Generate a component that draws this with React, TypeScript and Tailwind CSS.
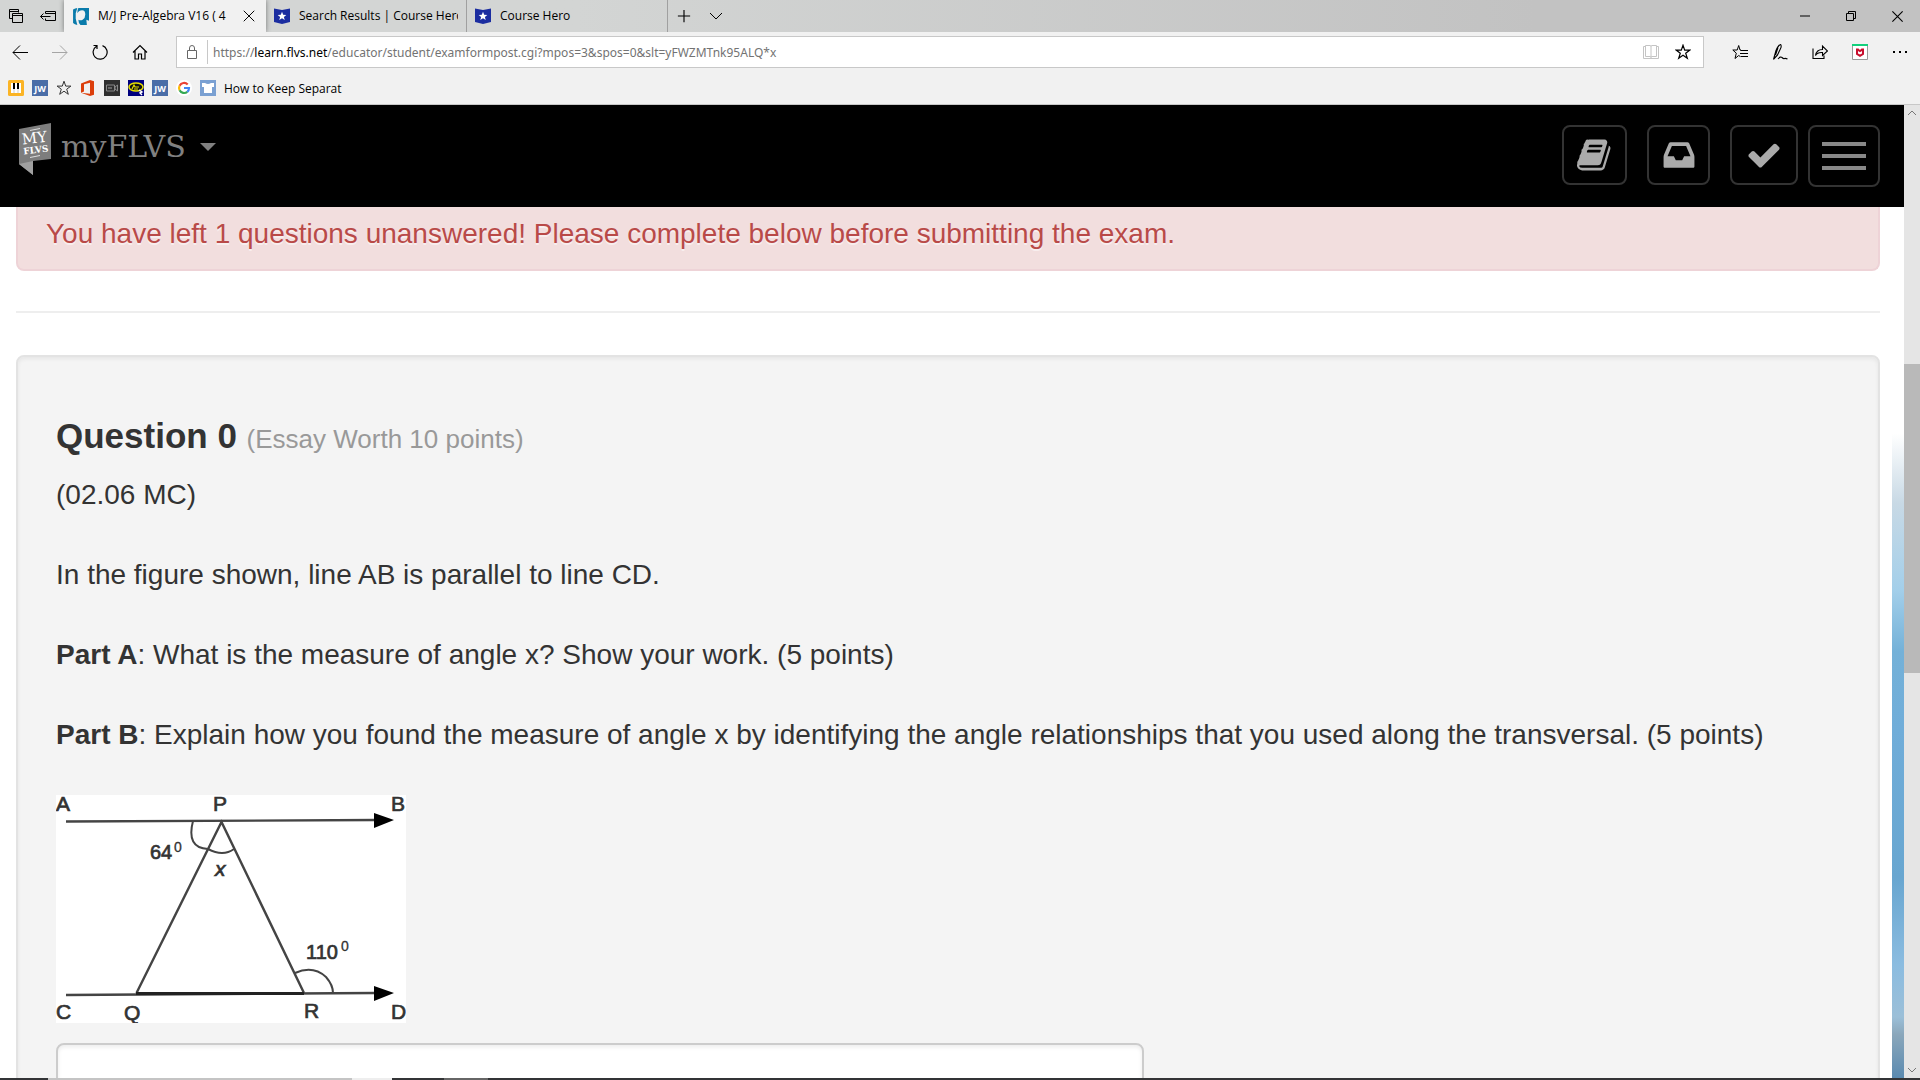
import type { ReactNode } from "react";

const ui = "font-['Open_Sans','Noto_Sans',sans-serif]";

function Glyph({ children, className = "size-4" }: { children: ReactNode; className?: string }) {
  return (
    <svg viewBox="0 0 16 16" fill="none" stroke="currentColor" strokeWidth="1" className={`shrink-0 ${className}`} aria-hidden="true">
      {children}
    </svg>
  );
}

const STAR = "M8 1.2l1.7 4.9h5.2l-4.2 3.1 1.6 5.1L8 11.2l-4.3 3.1 1.6-5.1L1.1 6.1h5.2z";

function CourseHeroIcon() {
  return (
    <Glyph>
      <path d="M0 .5l8 1.5 8-1.5V14l-8 2-8-2z" fill="#1b2da0" stroke="none" />
      <path d="M8 3.8l1.2 2.9 3.1.2-2.4 2 .8 3L8 10.2l-2.7 1.7.8-3-2.4-2 3.1-.2z" fill="#fff" stroke="none" />
    </Glyph>
  );
}

function Tab({ title, icon, active = false }: { title: string; icon: ReactNode; active?: boolean }) {
  return (
    <div
      className={`flex shrink-0 items-center gap-2 pl-2 ${
        active ? "w-[202px] bg-[#f1f1f1] pr-[10px] shadow-[0_0_5px_rgba(0,0,0,0.45)]" : "w-[201px] border-r border-[#a0a0a0] pr-2"
      }`}
    >
      {icon}
      <span className="min-w-0 flex-1 overflow-hidden pl-px whitespace-nowrap">{title}</span>
      {active && (
        <button aria-label="Close tab" className="-ml-1 flex w-[14px] justify-center">
          <Glyph className="size-3">
            <path d="M1 1l14 14M15 1L1 15" strokeWidth="1.3" />
          </Glyph>
        </button>
      )}
    </div>
  );
}

function WindowButton({ label, children }: { label: string; children: ReactNode }) {
  return (
    <button aria-label={label} className="flex w-[46px] items-center justify-center">
      {children}
    </button>
  );
}

function TabStrip() {
  return (
    <div className="flex h-8 shrink-0 overflow-hidden bg-linear-to-r from-[#d3d5d4] from-30% to-[#c2c2c2] to-80%">
      <div className="flex w-16 shrink-0 items-center gap-4 pl-2">
        <button aria-label="Tabs you've set aside">
          <Glyph>
            <path d="M4.5 10.500H1.500V1.500h9v3M1.500 3.500h9M4.500 5.500h10v9h-10zM4.500 7.500h10" />
          </Glyph>
        </button>
        <button aria-label="Set these tabs aside">
          <Glyph>
            <path d="M5.500 5.500v-2h10v9h-10v-2M5.500 5.500h10M0.500 8.500h10M3.500 5.500l-3 3 3 3" />
          </Glyph>
        </button>
      </div>
      <Tab
        active
        title="M/J Pre-Algebra V16 ( 4"
        icon={
          <Glyph className="size-[17px]">
            <path d="M1 1.500Q3 0 5 0L3.500 5v5L5 16Q2.500 15.500 1 14z" fill="#0a7bab" stroke="none" />
            <path d="M6 0h10v12l-2.500-1L14 16H8q-2-2-2-5 2 1 4 0 2.500-1.500 2.500-5Q12.500 2 9.500 2 6.500 2 5 5 5 1.500 6 0z" fill="#0a7bab" stroke="none" />
          </Glyph>
        }
      />
      <Tab title="Search Results | Course Hero" icon={<CourseHeroIcon />} />
      <Tab title="Course Hero" icon={<CourseHeroIcon />} />
      <button aria-label="New tab" className="flex w-8 items-center justify-center">
        <Glyph className="size-[14px]">
          <path d="M8 1v14M1 8h14" strokeWidth="1.300" />
        </Glyph>
      </button>
      <button aria-label="Show tab previews" className="flex w-8 items-center justify-center">
        <Glyph>
          <path d="M2 5l6 6 6-6" />
        </Glyph>
      </button>
      <div className="ml-auto flex">
        <WindowButton label="Minimize">
          <Glyph className="size-[10px]">
            <path d="M0 8h16" strokeWidth="1.600" />
          </Glyph>
        </WindowButton>
        <WindowButton label="Restore">
          <Glyph className="size-[10px]">
            <path d="M.8 4h11.200v11.200H.8zM4 4V.8h11.200V12H12" strokeWidth="1.600" />
          </Glyph>
        </WindowButton>
        <WindowButton label="Close">
          <Glyph className="size-[11px]">
            <path d="M.5.5l15 15M15.500.5l-15 15" strokeWidth="1.600" />
          </Glyph>
        </WindowButton>
      </div>
    </div>
  );
}

function ToolButton({ label, children, faded = false }: { label: string; children: ReactNode; faded?: boolean }) {
  return (
    <button aria-label={label} className={`flex w-10 items-center justify-center ${faded ? "text-[#a5a5a5]" : "text-black"}`}>
      {children}
    </button>
  );
}

function AddressBar() {
  return (
    <div className="flex h-10 shrink-0 items-center">
      <div className="flex w-44 shrink-0">
        <ToolButton label="Back">
          <Glyph>
            <path d="M16 8.500H1M8 1.500l-7 7 7 7" />
          </Glyph>
        </ToolButton>
        <ToolButton label="Forward" faded>
          <Glyph>
            <path d="M0 8.500h15M8 1.500l7 7-7 7" />
          </Glyph>
        </ToolButton>
        <ToolButton label="Refresh">
          <Glyph>
            <path d="M10.500 1.600A7 7 0 1 1 4.500 2.200M1.500 1.500h3.500v3.500" strokeWidth="1.200" />
          </Glyph>
        </ToolButton>
        <ToolButton label="Home">
          <Glyph>
            <path d="M1 8.500l7-7 7 7M3 7v8h3.500v-5h3v5H13V7" strokeWidth="1.200" />
          </Glyph>
        </ToolButton>
      </div>
      <div className="flex h-8 flex-1 items-center border border-[#c8c8c8] bg-white">
        <span className="flex w-[30px] justify-center text-[#666]">
          <Glyph>
            <path d="M3.500 6.500h9v8h-9zM5.500 6.500V4a2.500 2.500 0 0 1 5 0v2.500" />
          </Glyph>
        </span>
        <span className="h-6 w-px bg-[#c8c8c8]" />
        <a href="#exam" className="flex-1 pt-0.5 pl-[5px] font-['Noto_Sans',sans-serif] whitespace-nowrap text-[#737373]">
          https://<span className="text-black">learn.flvs.net</span>/educator/student/examformpost.cgi?mpos=3&amp;spos=0&amp;slt=yFWZMTnk95ALQ*x
        </a>
        <button aria-label="Reading view" className="flex w-8 justify-center text-[#c4c4c4]">
          <Glyph>
            <path d="M2.500 2.500H.5v12h15v-12h-2M2.500 1.500H7q1 0 1 1 0-1 1-1h4.500v11H9q-1 0-1 1 0-1-1-1H2.500zM8 2.500v11" />
          </Glyph>
        </button>
        <button aria-label="Add to favorites" className="mr-1 flex w-8 justify-center">
          <Glyph>
            <path d={STAR} strokeWidth="1.200" />
          </Glyph>
        </button>
      </div>
      <div className="flex pl-4">
        <ToolButton label="Hub">
          <Glyph>
            <path d="M9 6H8L6.700 1.500 5.200 6H.8l3.500 3.200L3 14.500l3.700-3 1.500 1M8.500 6.500H16M8 9.500h8M8.500 12.500H16" />
          </Glyph>
        </ToolButton>
        <ToolButton label="Add notes">
          <Glyph>
            <path d="M1.500 15.500L4 6.500q2-5 4.500-6 1 .5.500 3L5.500 11q-2 2-4 4.500M6 3.500L3.500 11M6 15q2.500-3 4-1.500t2.500 1 3 .5" strokeWidth="1.100" />
          </Glyph>
        </ToolButton>
        <ToolButton label="Share">
          <Glyph>
            <path d="M1 4.500v10h11v-3M3.500 11.500q1-6 7-6v-3.500l5 5-5 4.500V8.500q-5-.5-7 3z" strokeWidth="1.100" />
          </Glyph>
        </ToolButton>
        <ToolButton label="McAfee WebAdvisor">
          <Glyph>
            <path d="M.5.5h15v15H.5z" fill="#fff" stroke="#999" />
            <path d="M0 0h16v2H0z" fill="#13d07c" stroke="none" />
            <path d="M4 4.500l2.500 0L8 6l1.500-1.500 2.500 0v6L8 13l-4-2.500z" fill="#c8102e" stroke="none" />
            <path d="M6 7l2 1.200L10 7v2.500L8 10.500l-2-1z" fill="#fff" stroke="none" />
          </Glyph>
        </ToolButton>
        <ToolButton label="Settings and more">
          <Glyph>
            <path d="M1 7h2v2H1zM7 7h2v2H7zM13 7h2v2h-2z" fill="currentColor" stroke="none" />
          </Glyph>
        </ToolButton>
      </div>
    </div>
  );
}

function JwIcon() {
  return (
    <span className="flex size-4 items-center justify-center bg-[#4a6da7] font-['Open_Sans',sans-serif] text-[9px] leading-none font-bold text-white">
      JW
    </span>
  );
}

function FavoritesBar() {
  return (
    <div className="flex h-[33px] shrink-0 items-center gap-2 border-b border-[#c8c8c8] pl-2">
      <a href="#piano" aria-label="Piano">
        <Glyph>
          <rect width="16" height="16" rx="1.500" fill="#fbb425" stroke="none" />
          <path d="M3 3h10v10H3z" fill="#fff" stroke="none" />
          <path d="M5 3h2v6H5zM9 3h2v6H9z" fill="#000" stroke="none" />
          <path d="M6 9v4M10 9v4" stroke="#999" strokeWidth=".5" />
        </Glyph>
      </a>
      <a href="#jw" aria-label="JW">
        <JwIcon />
      </a>
      <a href="#star" aria-label="Favorite" className="text-[#333]">
        <Glyph>
          <path d={STAR} />
        </Glyph>
      </a>
      <a href="#office" aria-label="Office">
        <Glyph>
          <path d="M1 3.500L10 0l4 1.200v13.600L10 16l-9-3.200 9 1V2.800L4 4.200v7.300l-3 1.300z" fill="#dc3e0b" stroke="none" />
        </Glyph>
      </a>
      <a href="#camera" aria-label="Camera">
        <Glyph>
          <path d="M0 0h16v16H0z" fill="#2f2f2f" stroke="none" />
          <path d="M2.500 5h8v6h-8zM11 7l2.500-2v6L11 9z" stroke="#888" />
          <path d="M4 7h4v2H4z" fill="#666" stroke="none" />
        </Glyph>
      </a>
      <a href="#eye" aria-label="Eye">
        <Glyph>
          <path d="M0 0h16v16H0z" fill="#00007e" stroke="none" />
          <ellipse cx="8" cy="7" rx="7" ry="4" fill="#111" stroke="#e8e000" strokeWidth="1.500" />
          <path d="M4 9l2-4 1 2h4M6 9h4" stroke="#e8e000" strokeWidth="1.200" />
          <path d="M11 10l3 2-2 1 2 2" stroke="#fff" strokeWidth="1.400" />
        </Glyph>
      </a>
      <a href="#jw-2" aria-label="JW">
        <JwIcon />
      </a>
      <a href="#google" aria-label="Google">
        <Glyph>
          <circle cx="8" cy="8" r="8" fill="#fff" stroke="none" />
          <g strokeWidth="2.200">
            <path d="M11.700 4.500A5 5 0 0 0 3.600 5.700" stroke="#ea4335" />
            <path d="M3.600 5.700a5 5 0 0 0 0 4.600" stroke="#fbbc05" />
            <path d="M3.600 10.300a5 5 0 0 0 7.700 1.500" stroke="#34a853" />
            <path d="M11.300 11.800A5 5 0 0 0 13 8H8" stroke="#4285f4" />
          </g>
        </Glyph>
      </a>
      <a href="#separate" className="flex items-center gap-2">
        <Glyph>
          <path d="M0 0h16v16H0z" fill="#7aa0d2" stroke="none" />
          <path d="M2 3h3q3 2 6 0h3v4h-2v6H4V7H2z" fill="#fff" stroke="none" />
        </Glyph>
        <span className="pt-0.5">How to Keep Separat</span>
      </a>
    </div>
  );
}

const BOOK =
  "M1639 478q40 57 18 129l-275 906q-19 64-76.5 107.5t-122.5 43.5h-923q-77 0-148.5-53.5t-99.5-131.5q-24-67-2-127 0-4 3-27t4-37q1-8-3-21.5t-3-19.5q2-11 8-21t16.5-23.5 16.5-23.5q23-38 45-91.5t30-91.5q3-10 .5-30t-.5-28q3-11 17-28t17-23q21-36 42-92t25-90q1-9-2.5-32t.5-28q4-13 22-30.5t22-22.5q19-26 42.5-84.5t27.5-96.5q1-8-3-25.5t-2-26.5q2-8 9-18t18-23 17-21q8-12 16.5-30.5t15-35 16-36 19.5-32 26.5-23.5 36-11.5 47.5 5.5l-1 3q38-9 51-9h761q74 0 114 56t18 130l-274 906q-36 119-71.5 153.5t-128.5 34.5h-869q-27 0-38 15-11 16-1 43 24 70 144 70h923q29 0 56-15.5t35-41.5l300-987q7-22 5-57 38 15 59 43zm-1064 2q-4 13 2 22.5t20 9.5h608q13 0 25.5-9.5t16.5-22.5l21-64q4-13-2-22.5t-20-9.5h-608q-13 0-25.5 9.5t-16.5 22.5zm-83 256q-4 13 2 22.5t20 9.5h608q13 0 25.5-9.5t16.5-22.5l21-64q4-13-2-22.5t-20-9.5h-608q-13 0-25.5 9.5t-16.5 22.5z";
const INBOX =
  "M1151 960h316q-1-3-2.5-8.5t-2.5-7.5l-212-496h-708l-212 496q-1 3-2.5 8.5t-2.5 7.5h316l95 192h320zm513 30v482q0 26-19 45t-45 19h-1408q-26 0-45-19t-19-45v-482q0-62 25-123l238-552q10-25 36.5-42t52.5-17h832q26 0 52.5 17t36.5 42l238 552q25 61 25 123z";
const CHECK =
  "M1671 566q0 40-28 68l-724 724-136 136q-28 28-68 28t-68-28l-136-136-362-362q-28-28-28-68t28-68l136-136q28-28 68-28t68 28l294 295 656-657q28-28 68-28t68 28l136 136q28 28 28 68z";

function HeaderButton({ label, path, className }: { label: string; path: string; className: string }) {
  return (
    <button aria-label={label} className={`flex h-[60px] items-center justify-center rounded-lg border-2 border-[#333] text-[#aaa] ${className}`}>
      <svg viewBox="0 0 1792 1792" fill="currentColor" className="size-9" aria-hidden="true">
        <path d={path} />
      </svg>
    </button>
  );
}

function SiteHeader() {
  return (
    <header className="flex h-[102px] shrink-0 items-start justify-between bg-black pr-6 pl-[19px]">
      <button className="flex items-start text-[#808080]">
        <svg viewBox="0 0 32 52" className="mt-[18px] h-[52px] w-8" aria-hidden="true">
          <path d="M0 6L32 0v36L14 38v14L0 41z" fill="#7d7d7d" />
          <path d="M0 41l14-3v14z" fill="#a0a0a0" />
          <path d="M11 7.500l10-2M11 34.500l10-2" stroke="#ddd" />
          <g fill="#fff" textAnchor="middle" fontFamily="DejaVu Serif, serif" transform="rotate(-7 16 20)">
            <text x="16" y="20" fontSize="15">MY</text>
            <text x="16" y="30" fontSize="9" fontWeight="700">FLVS</text>
          </g>
        </svg>
        <span className="mt-5 ml-[10px] font-['DejaVu_Serif',serif] text-[30px] leading-[44px]">myFLVS</span>
        <svg viewBox="0 0 16 8" className="mt-[38px] ml-[14px] h-2 w-4" fill="currentColor" aria-hidden="true">
          <path d="M0 0h16L8 8z" />
        </svg>
      </button>
      <nav className="flex items-start pt-5">
        <HeaderButton label="Courses" path={BOOK} className="mr-5 w-[65px]" />
        <HeaderButton label="Inbox" path={INBOX} className="mr-5 w-[63px]" />
        <HeaderButton label="Assessments" path={CHECK} className="mr-[10px] w-[68px]" />
        <button aria-label="Menu" className="flex h-[62px] w-[72px] flex-col items-center justify-center gap-2 rounded-lg border-2 border-[#333]">
          <span className="h-1 w-11 bg-[#888]" />
          <span className="h-1 w-11 bg-[#888]" />
          <span className="h-1 w-11 bg-[#888]" />
        </button>
      </nav>
    </header>
  );
}

function Figure() {
  return (
    <svg viewBox="0 0 350 228" role="img" aria-label="Parallel lines AB and CD with triangle PQR" className="h-[228px] w-[350px] bg-white">
      <g fill="none" stroke="#444" strokeWidth="2.400">
        <path d="M10 26.500L320 25M10 200l310-2" />
        <path d="M80.500 198L165.500 27 248 198" />
        <path d="M137 26Q130 53 152 54Q167 62 178 54M239 178Q257 170 270 182Q277 190 277 198" strokeWidth="2" />
        <path d="M80 198.500h168" stroke="#222" strokeWidth="3" />
      </g>
      <path d="M318 18l20 7-20 8zM318 191l20 7-20 8z" fill="#000" />
      <g fill="#333" stroke="#333" strokeWidth=".7" fontFamily="Liberation Sans, Arial, sans-serif" fontSize="21">
        <text x="0" y="16">A</text>
        <text x="157" y="16">P</text>
        <text x="335" y="16">B</text>
        <text x="0" y="224">C</text>
        <text x="68" y="225">Q</text>
        <text x="248" y="223">R</text>
        <text x="335" y="224">D</text>
        <text x="94" y="64" fontSize="20">64</text>
        <text x="118" y="57" fontSize="14" strokeWidth=".3">0</text>
        <text x="159" y="81" fontStyle="italic">x</text>
        <text x="250" y="164" fontSize="20">110</text>
        <text x="285" y="156" fontSize="14" strokeWidth=".3">0</text>
      </g>
    </svg>
  );
}

function Exam() {
  return (
    <main className="min-h-0 flex-1 overflow-hidden pr-3 pl-4">
      <div className="rounded-b-lg border-2 border-t-0 border-[#eed3d7] bg-[#f2dede] px-7 pt-[7px] pb-[15px] text-[#b94a48] [text-shadow:0_2px_0_rgba(255,255,255,0.5)]">
        You have left 1 questions unanswered! Please complete below before submitting the exam.
      </div>
      <hr className="my-10 h-1 border-t-2 border-b-2 border-t-[#eee] border-b-white" />
      <section className="rounded-lg border-2 border-[#e3e3e3] bg-[#f4f4f4] p-[38px] shadow-[inset_0_2px_4px_rgba(0,0,0,0.06)]">
        <h4 className="mt-[21px] mb-[19px] text-[35px] leading-10 font-bold">
          Question 0 <small className="text-[26px] leading-none font-normal text-[#999]">(Essay Worth 10 points)</small>
        </h4>
        <div className="flex flex-col gap-10">
          <p>(02.06 MC)</p>
          <p>In the figure shown, line AB is parallel to line CD.</p>
          <p>
            <strong>Part A</strong>: What is the measure of angle x? Show your work. (5 points)
          </p>
          <p>
            <strong>Part B</strong>: Explain how you found the measure of angle x by identifying the angle relationships that you used along the transversal. (5 points)
          </p>
          <Figure />
        </div>
        <textarea
          aria-label="Your answer"
          className="mt-5 block h-60 w-[61%] resize-none rounded-lg border-2 border-[#ccc] bg-white p-2 shadow-[inset_0_2px_4px_rgba(0,0,0,0.08)]"
        />
      </section>
    </main>
  );
}

function Scrollbar() {
  return (
    <div className="flex w-4 shrink-0 flex-col items-center bg-[#e5e5e5] text-[#777]" aria-hidden="true">
      <Glyph className="mt-1 size-2">
        <path d="M0 12l8-8 8 8" strokeWidth="2" />
      </Glyph>
      <div className="min-h-0 flex-[247]" />
      <div className="min-h-0 w-full flex-[309] bg-[#b9b9b9]" />
      <div className="min-h-0 flex-[393]" />
      <Glyph className="mb-1 size-2">
        <path d="M0 4l8 8 8-8" strokeWidth="2" />
      </Glyph>
    </div>
  );
}

export default function App() {
  return (
    <div className="flex h-screen flex-col overflow-hidden bg-white">
      <div className={`shrink-0 bg-[#f1f1f1] text-[12px] leading-4 text-black ${ui}`}>
        <TabStrip />
        <AddressBar />
        <FavoritesBar />
      </div>
      <div className="flex min-h-0 flex-1">
        <div className="flex min-w-0 flex-1 flex-col font-['Liberation_Sans',Arial,sans-serif] text-[28px] leading-10 text-[#333]">
          <SiteHeader />
          <div className="flex min-h-0 flex-1">
            <Exam />
            <div className="w-3 shrink-0 bg-[linear-gradient(#fff_26%,#c8d9e5_34%,#a3cfea_44%,#74b1d8_51%,#70add9_60%,#68a6d0_77%,#8bbce0_87%,#9bbfd8_93%,#8aa7bb_95%,#5a8ab0)]" />
          </div>
        </div>
        <Scrollbar />
      </div>
      <footer className="flex h-[2px] shrink-0 bg-[#333436]">
        <div className="ml-12 w-[304px] bg-[#c4c4c4]" />
        <div className="w-10 bg-[#eee]" />
        <div className="ml-[52px] w-11 bg-[#666]" />
      </footer>
    </div>
  );
}
